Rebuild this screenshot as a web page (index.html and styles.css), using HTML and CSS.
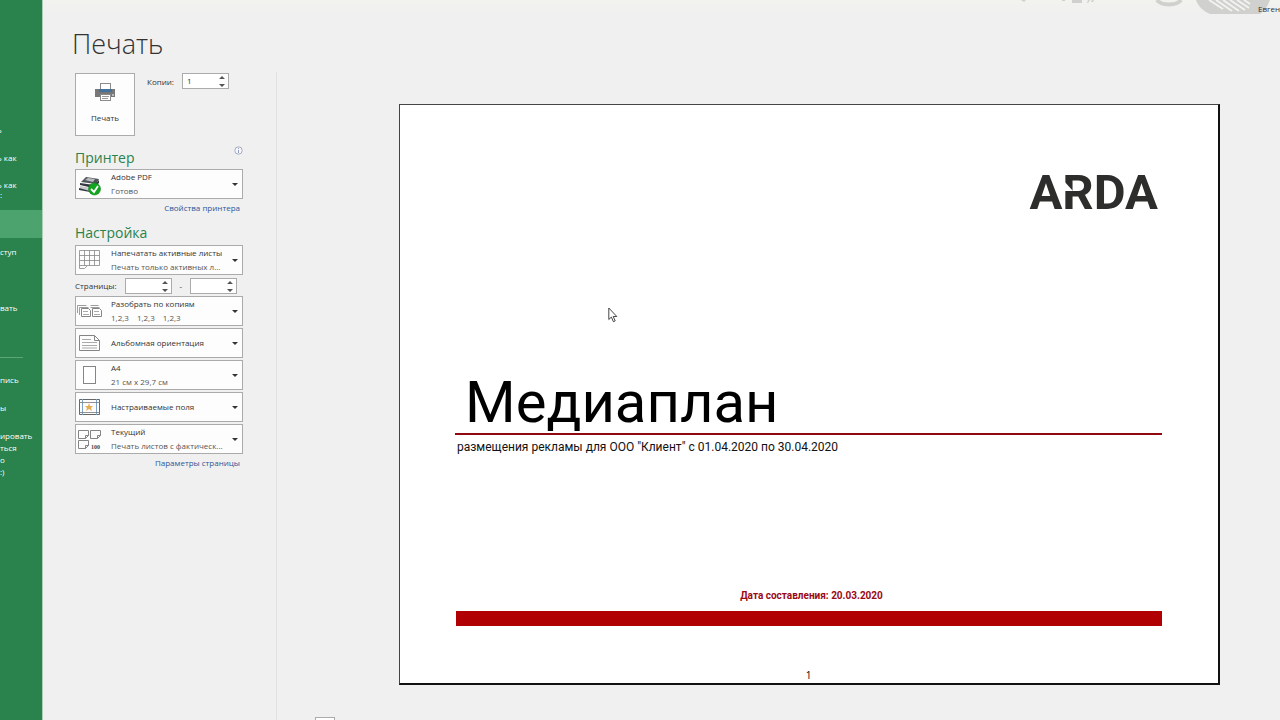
FILE: index.html
```html
<!DOCTYPE html>
<html lang="ru">
<head>
<meta charset="utf-8">
<title>Печать</title>
<link rel="stylesheet" href="styles.css">
</head>
<body>
<div class="app">
  <nav class="sidebar" aria-label="Файл">
    <a class="nav-item nav-shifted" href="#">ь</a>
    <a class="nav-item nav-shifted" href="#">ь как</a>
    <a class="nav-item nav-tall nav-shifted" href="#">ь как<br>:</a>
    <a class="nav-item nav-active" href="#" aria-label="Печать"></a>
    <a class="nav-item" href="#">ступ</a>
    <a class="nav-item" href="#" aria-label="Экспорт"></a>
    <a class="nav-item" href="#">вать</a>
    <hr class="nav-line">
    <a class="nav-item" href="#">пись</a>
    <a class="nav-item" href="#">ы</a>
    <a class="nav-item nav-long" href="#">ировать<br>ться<br>о<br>:)</a>
  </nav>

  <div class="page">
    <header class="topbar">
      <svg class="decor" width="270" height="14" viewBox="0 0 270 14" aria-hidden="true">
        <g fill="#d0d0ce">
          <path d="M11 0h5l-2 2zM52 0h3v1h-3zM62 0h10v3H62z"/>
          <path d="M78 0h2l-2 3h-1zM82 0h2l-1 2h-2z"/>
          <path d="M186 0h74c-2 6-6 11-10 14h-50c-7-3-12-8-14-14z"/>
        </g>
        <path d="M147 0c4 6 20 6 24 0" fill="none" stroke="#d0d0ce" stroke-width="4"/>
        <path d="M199 0l14 9M206 0l16 11M213 0l16 11M220 0l15 10M227 0l12 8M234 0l6 4" stroke="#f2f2ef" stroke-width="2"/>
      </svg>
      <span class="user">Евген</span>
    </header>

    <main class="content">
      <section class="settings">
        <h1>Печать</h1>
        <div class="print-row">
          <button class="print-button" type="button">
            <svg width="22" height="20" viewBox="0 0 22 20" aria-hidden="true">
              <path d="M1 7h4v3h13V7h3v8H1z" fill="#777"/>
              <rect x="6.500" y="1.500" width="10" height="8" fill="#fff" stroke="#8b8b8b"/>
              <rect x="5" y="7" width="13" height="3" fill="#42719b"/>
              <rect x="6.500" y="12.500" width="10" height="6" fill="#fff" stroke="#8b8b8b"/>
              <path d="M8 14.500h7M8 16.500h6" stroke="#999"/>
              <path d="M18 13h2" stroke="#fff"/>
            </svg>
            <span>Печать</span>
          </button>
          <label class="copies-label" for="copies">Копии:</label>
          <span class="spin">
            <input id="copies" type="text" value="1">
            <svg width="6" height="12" viewBox="0 0 6 12" aria-hidden="true"><path d="M0 4l3-3 3 3zM0 9l3 3 3-3z" fill="#555"/></svg>
          </span>
        </div>

        <div class="heading">
          <h2>Принтер</h2>
          <svg class="info" width="9" height="9" viewBox="0 0 9 9" aria-hidden="true"><circle cx="4.500" cy="4.500" r="3.700" fill="#f8f8fc" stroke="#9298b4" stroke-width=".8"/><path d="M4.500 2v1M4.500 4v3" stroke="#8b9cc4"/></svg>
        </div>
        <button class="picker" type="button" aria-haspopup="listbox">
          <svg class="picker-icon" width="26" height="24" viewBox="0 0 26 24" aria-hidden="true">
            <path d="M4 10l5-5 13 2-3 5z" fill="#50545a"/><path d="M8 8l3-2 7 1-2 3z" fill="#b9bdc2"/>
            <path d="M3 11l14 2 5-5v3l-6 5-13-3z" fill="#35393f"/><path d="M3 14l11 2v3L3 17z" fill="#c5c8cc"/><path d="M2 16l11 3v1L2 18z" fill="#34373d"/>
            <circle cx="17.500" cy="17" r="6" fill="#12a51f" stroke="#0b8217" stroke-width=".6"/><path d="M14 17l3 3 4-6" fill="none" stroke="#fff" stroke-width="1.800"/>
          </svg>
          <span class="picker-text"><span>Adobe PDF</span><small>Готово</small></span>
          <span class="caret"></span>
        </button>
        <a class="link" href="#">Свойства принтера</a>

        <div class="heading heading-second"><h2>Настройка</h2></div>
        <div class="options">
          <button class="picker" type="button" aria-haspopup="listbox">
            <svg class="picker-icon" width="26" height="24" viewBox="0 0 26 24" fill="none" stroke="#858585" aria-hidden="true">
              <path d="M2.500 2.500h20v15h-12l-3 3h-5zM2.500 7.500h20M2.500 12.500h20M7.500 2.500v15M12.500 2.500v15M17.500 2.500v15M2.500 17.500h8" stroke-width=".8"/>
            </svg>
            <span class="picker-text"><span>Напечатать активные листы</span><small>Печать только активных л...</small></span>
            <span class="caret"></span>
          </button>
          <div class="pages-row">
            <label for="from">Страницы:</label>
            <span class="spin"><input id="from" type="text"><svg width="6" height="12" viewBox="0 0 6 12" aria-hidden="true"><path d="M0 4l3-3 3 3zM0 9l3 3 3-3z" fill="#555"/></svg></span>
            <span class="dash">-</span>
            <span class="spin"><input type="text" aria-label="до страницы"><svg width="6" height="12" viewBox="0 0 6 12" aria-hidden="true"><path d="M0 4l3-3 3 3zM0 9l3 3 3-3z" fill="#555"/></svg></span>
          </div>
          <button class="picker" type="button" aria-haspopup="listbox">
            <svg class="picker-icon" width="26" height="24" viewBox="0 0 26 24" fill="none" stroke="#858585" aria-hidden="true">
              <path d="M.5 14V6.500h9M2.500 16V8.500h9M13.500 6.500h8M13.500 8.500h9" stroke-width=".8"/>
              <path d="M4.500 9.500h7l2 2v6h-9zM15.500 9.500h7l2 2v6h-9z" fill="#fff"/><path d="M6 12.500h5M6 15.500h6M17 12.500h5M17 15.500h6" stroke-width=".7"/>
            </svg>
            <span class="picker-text"><span>Разобрать по копиям</span><small class="sets"><span>1,2,3</span><span>1,2,3</span><span>1,2,3</span></small></span>
            <span class="caret"></span>
          </button>
          <button class="picker" type="button" aria-haspopup="listbox">
            <svg class="picker-icon" width="26" height="24" viewBox="0 0 26 24" fill="none" stroke="#858585" aria-hidden="true">
              <path d="M2.500 4.500h15l5 5v10h-20zM17.500 4.500v5h5"/><path d="M5 8.500h9M5 11.500h15M5 14.500h15M5 17h15" stroke-width=".7"/>
            </svg>
            <span class="picker-text"><span>Альбомная ориентация</span></span>
            <span class="caret"></span>
          </button>
          <button class="picker" type="button" aria-haspopup="listbox">
            <svg class="picker-icon" width="26" height="24" viewBox="0 0 26 24" aria-hidden="true"><rect x="6.500" y="3.500" width="12" height="17" fill="#fff" stroke="#858585"/></svg>
            <span class="picker-text"><span>A4</span><small>21 см x 29,7 см</small></span>
            <span class="caret"></span>
          </button>
          <button class="picker" type="button" aria-haspopup="listbox">
            <svg class="picker-icon" width="26" height="24" viewBox="0 0 26 24" fill="none" aria-hidden="true">
              <path d="M2.500 4.500h20v15h-20z" stroke="#666"/><path d="M5.500 4v16M19.500 4v16" stroke="#7fa3c8"/><path d="M2 7.500h21M2 17.500h21" stroke="#777" stroke-width=".8"/>
              <path d="M12 8l1 3h3l-2 2 1 3-3-2-3 2 1-3-2-2h3z" fill="#e6ad55"/>
            </svg>
            <span class="picker-text"><span>Настраиваемые поля</span></span>
            <span class="caret"></span>
          </button>
          <button class="picker" type="button" aria-haspopup="listbox">
            <svg class="picker-icon" width="26" height="24" viewBox="0 0 26 24" fill="none" stroke="#777" aria-hidden="true">
              <path d="M1.500 3.500h10v5l-3 3h-7zM11.500 8.500h-3v3M13.500 3.500h10v5l-3 3h-7zM23.500 8.500h-3v3M1.500 13.500h10v5l-3 3h-7zM11.500 18.500h-3v3" stroke-width=".9"/>
              <text class="scale-text" x="14" y="22">100</text>
            </svg>
            <span class="picker-text"><span>Текущий</span><small>Печать листов с фактическ...</small></span>
            <span class="caret"></span>
          </button>
        </div>
        <a class="link" href="#">Параметры страницы</a>
      </section>

      <section class="preview" aria-label="Предварительный просмотр">
        <article class="sheet">
          <div class="brand">ARDA
            <svg class="brand-cut" width="12" height="12" viewBox="0 0 12 12" aria-hidden="true"><path d="M0 0l10 11H0z" fill="#fff"/></svg>
          </div>
          <h3 class="plan-title">Медиаплан</h3>
          <p class="plan-sub">размещения рекламы для ООО "Клиент" с 01.04.2020 по 30.04.2020</p>
          <p class="plan-date">Дата составления: 20.03.2020</p>
          <div class="band"></div>
          <footer class="sheet-number">1</footer>
        </article>
        <input class="page-box" type="text" aria-label="Текущая страница">
      </section>
    </main>
  </div>
  <svg class="cursor" width="10" height="16" viewBox="0 0 10 16" aria-hidden="true"><path d="M.8 1v11.500l2.600-2.400 2 4.600 1.800-.8-2-4.400h3.600z" fill="#fff" stroke="#333" stroke-width=".9"/></svg>
</div>
</body>
</html>
```
FILE: styles.css
```css
* { box-sizing: border-box; }
body {
  margin: 0;
  background: #f0f0f0;
  color: #333;
  font: 500 8px/14px "Open Sans", "Noto Sans", sans-serif;
}
h1, h2, h3, p { margin: 0; }
button, input { font: inherit; color: inherit; border-radius: 0; }
a { text-decoration: none; }

.app {
  position: relative;
  display: flex;
  height: 100vh;
  overflow: hidden;
}

.sidebar {
  display: flex;
  flex-direction: column;
  flex: 0 0 43px;
  padding-top: 116px;
  background: #2a824c;
  border-right: 1px solid #a9cfb7;
  overflow: hidden;
}
.nav-item {
  flex: none;
  height: 28px;
  padding-top: 8px;
  color: #fff;
  line-height: 12px;
  white-space: nowrap;
}
.nav-shifted { text-indent: -3px; }
.nav-tall { height: 38px; line-height: 10px; }
.nav-active { background: #4da36e; }
.nav-long { height: auto; }
.nav-line {
  width: 23px;
  margin: 35px 0 8px;
  border: 0;
  border-top: 1px solid #5ca579;
}

.page { display: flex; flex: 1; flex-direction: column; min-width: 0; }
.topbar {
  display: flex;
  flex: none;
  justify-content: flex-end;
  height: 14px;
  background: linear-gradient(#f2f2ee, #f0f0f0);
}
.decor { flex: none; }
.user {
  width: 22px;
  margin-left: -22px;
  padding-top: 3px;
  line-height: 12px;
}

.content { display: flex; flex: 1; min-height: 0; }
.settings {
  flex: none;
  width: 200px;
  padding: 9px 0 0 32px;
}
h1 {
  margin-left: -3px;
  font-size: 27px;
  font-weight: 300;
  line-height: 42px;
}
.print-row { display: flex; align-items: flex-start; margin-top: 8px; }
.print-button {
  display: flex;
  flex-direction: column;
  align-items: center;
  gap: 9px;
  width: 60px;
  height: 63px;
  padding: 8px 0 0;
  background: #fdfdfd;
  border: 1px solid #ababab;
}
.copies-label { margin: 2px 8px 0 12px; }
.spin {
  display: flex;
  align-items: center;
  width: 47px;
  height: 16px;
  padding-right: 3px;
  background: #fff;
  border: 1px solid #ababab;
}
.spin input {
  flex: 1;
  min-width: 0;
  height: 14px;
  padding: 0 4px;
  background: none;
  border: 0;
}
.heading { display: flex; justify-content: space-between; margin-top: 10px; }
.heading-second { margin-top: 6px; }
h2 {
  color: #2a824c;
  font-size: 14px;
  font-weight: 400;
  line-height: 23px;
}
.picker {
  display: flex;
  align-items: center;
  width: 100%;
  height: 30px;
  padding: 0 4px 0 0;
  background: #fdfdfd;
  border: 1px solid #ababab;
  text-align: left;
}
.picker-icon { flex: none; margin: 0 8px 0 1px; }
.picker-text {
  display: flex;
  flex: 1;
  flex-direction: column;
  min-width: 0;
  white-space: nowrap;
}
.picker small { color: #555; font-size: 8px; }
.sets { display: flex; gap: 8px; }
.caret {
  border: 3px solid transparent;
  border-top-color: #333;
  border-bottom: 0;
}
.link {
  display: block;
  margin: 2px 3px 0 0;
  color: #2b579a;
  text-align: right;
}
.options { display: grid; grid-template-columns: minmax(0, 1fr); gap: 2px; padding-top: 1px; }
.pages-row { display: flex; align-items: center; justify-content: space-between; height: 17px; padding-right: 6px; }
.scale-text { fill: #444; stroke: none; font: bold 6px "Liberation Serif", serif; }

.preview {
  display: flex;
  flex: 1;
  flex-direction: column;
  margin: 58px 0 0 33px;
  padding: 32px 60px 0 38px;
  border-left: 1px solid #e2e2e2;
}
.sheet {
  display: flex;
  flex: none;
  flex-direction: column;
  margin-left: 84px;
  height: 581px;
  padding: 59px 56px 0 55px;
  background: #fff;
  border: 1px solid #444;
  border-right: 2px solid #111;
  border-bottom: 2px solid #111;
  color: #111;
  font-family: Roboto, sans-serif;
  font-weight: 400;
}
.brand {
  position: relative;
  align-self: flex-end;
  margin-right: 4px;
  color: #2d2d2b;
  font-size: 49px;
  font-weight: 700;
  line-height: 58px;
}
.brand-cut { position: absolute; left: 34px; top: 16px; }
.plan-title {
  margin-top: 145px;
  padding: 5px 0 0 10px;
  border-bottom: 2px solid #900810;
  color: #000;
  font-size: 58px;
  font-weight: 400;
  line-height: 61px;
}
.plan-sub { padding: 3px 0 0 2px; font-size: 12px; line-height: 18px; }
.plan-date {
  margin-top: 133px;
  padding-left: 6px;
  color: #9a0914;
  font-size: 10px;
  font-weight: 700;
  text-align: center;
}
.band { height: 15px; margin: 8px 0 0 1px; background: #b00004; }
.sheet-number { margin-top: 42px; font: 10px/14px "Noto Sans", sans-serif; text-align: center; }
.page-box {
  width: 20px;
  height: 16px;
  margin-top: 32px;
  background: #fff;
  border: 1px solid #ababab;
}
.cursor { position: absolute; left: 608px; top: 307px; }
```
